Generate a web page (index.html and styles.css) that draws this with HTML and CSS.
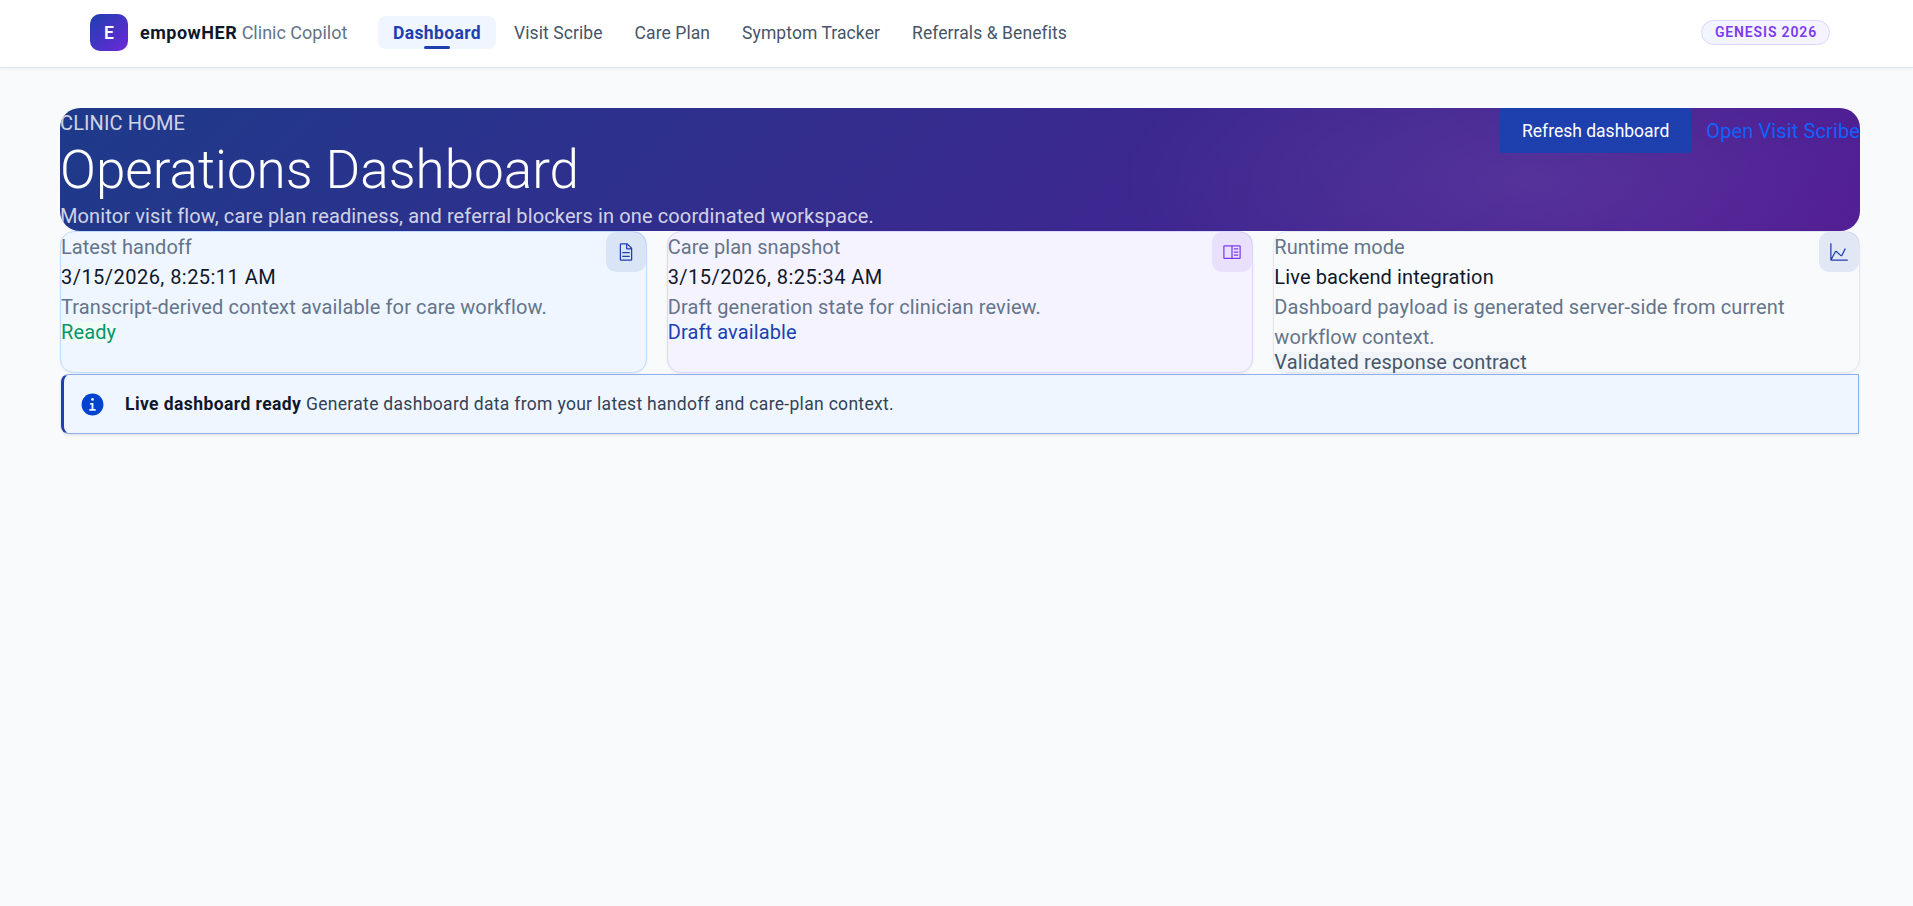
FILE: index.html
```html
<!DOCTYPE html>
<html lang="en">
<head>
    <meta charset="UTF-8">
    <title>empowHER Clinic Copilot</title>
    <meta name="viewport" content="width=device-width, initial-scale=1.0">
    <link rel="stylesheet" href="styles.css">
</head>
<body>
    <header class="topbar">
        <div class="brand">
            <span class="brand-mark">E</span>
            <span class="brand-name"><strong>empowHER</strong> <span class="brand-sub">Clinic Copilot</span></span>
        </div>
        <nav class="nav">
            <a class="nav-link active" href="#">Dashboard</a>
            <a class="nav-link" href="#">Visit Scribe</a>
            <a class="nav-link" href="#">Care Plan</a>
            <a class="nav-link" href="#">Symptom Tracker</a>
            <a class="nav-link" href="#">Referrals &amp; Benefits</a>
        </nav>
        <span class="badge">GENESIS 2026</span>
    </header>

    <main class="page">
        <!-- Hero -->
        <section class="hero">
            <div>
                <p class="eyebrow">CLINIC HOME</p>
                <h1>Operations Dashboard</h1>
                <p class="lead">Monitor visit flow, care plan readiness, and referral blockers in one coordinated workspace.</p>
            </div>
            <div class="hero-actions">
                <button class="btn">Refresh dashboard</button>
                <a class="hero-link" href="#">Open Visit Scribe</a>
            </div>
        </section>

        <!-- Status cards -->
        <section class="cards">
            <article class="card card-blue">
                <div class="card-body">
                    <p class="label">Latest handoff</p>
                    <p class="value date">3/15/2026, 8:25:11 AM</p>
                    <p class="desc">Transcript-derived context available for care workflow.</p>
                    <span class="tag tag-green">Ready</span>
                </div>
                <span class="card-icon">
                    <svg width="20" height="20" viewBox="0 0 32 32" fill="currentColor"><path d="M25.7 9.300l-7-7A.9.9 0 0 0 18 2H8a2 2 0 0 0-2 2v24a2 2 0 0 0 2 2h16a2 2 0 0 0 2-2V10a.9.9 0 0 0-.3-.7zM18 4.400l5.600 5.600H18zM24 28H8V4h8v6a2 2 0 0 0 2 2h6zM10 22h12v2H10zM10 16h12v2H10z"/></svg>
                </span>
            </article>
            <article class="card card-purple">
                <div class="card-body">
                    <p class="label">Care plan snapshot</p>
                    <p class="value date">3/15/2026, 8:25:34 AM</p>
                    <p class="desc">Draft generation state for clinician review.</p>
                    <span class="tag tag-blue">Draft available</span>
                </div>
                <span class="card-icon">
                    <svg width="20" height="20" viewBox="0 0 32 32" fill="currentColor"><path d="M19 10h7v2h-7zM19 15h7v2h-7zM19 20h7v2h-7z"/><path d="M28 5H4a2 2 0 0 0-2 2v18a2 2 0 0 0 2 2h24a2 2 0 0 0 2-2V7a2 2 0 0 0-2-2zM4 7h11v18H4zm13 18V7h11v18z"/></svg>
                </span>
            </article>
            <article class="card">
                <div class="card-body">
                    <p class="label">Runtime mode</p>
                    <p class="value">Live backend integration</p>
                    <p class="desc">Dashboard payload is generated server-side from current workflow context.</p>
                    <span class="tag tag-gray">Validated response contract</span>
                </div>
                <span class="card-icon">
                    <svg width="20" height="20" viewBox="0 0 32 32" fill="currentColor"><path d="M4.670 28l6.390-12 7.300 6.490a2 2 0 0 0 1.700.470 2 2 0 0 0 1.420-1.070L27 10.900l-1.820-.9-5.490 11-7.300-6.490a2 2 0 0 0-1.680-.510 2 2 0 0 0-1.420 1L4 25V2H2v26a2 2 0 0 0 2 2h26v-2z"/></svg>
                </span>
            </article>
        </section>

        <div class="notice">
            <svg class="notice-icon" width="25" height="25" viewBox="0 0 32 32"><circle cx="16" cy="16" r="14" fill="#0043ce"/><circle cx="16" cy="9.500" r="1.700" fill="#eff6ff"/><path d="M13 14h4.200v7.700h2.900V24h-8.200v-2.300h2.900v-5.400H13z" fill="#eff6ff"/></svg>
            <p class="notice-text"><strong>Live dashboard ready</strong> Generate dashboard data from your latest handoff and care-plan context.</p>
        </div>
    </main>
</body>
</html>
```

FILE: styles.css
```css
:root {
    --blue: #1e40af;
    --purple: #7c3aed;
    --ink: #0f172a;
    --muted: #64748b;
    --slate: #475569;
    --page-bg: #f8fafc;
}
* {
    box-sizing: border-box;
}
body {
    margin: 0;
    min-height: 100vh;
    background: var(--page-bg);
    color: var(--ink);
    font-family: Roboto, "Noto Sans", sans-serif;
    font-size: 20px;
    line-height: 30px;
    letter-spacing: 0.12px;
}
p, h1 {
    margin: 0;
}
a {
    text-decoration: none;
}

/* Top bar */
.topbar {
    display: flex;
    align-items: center;
    height: 68px;
    padding: 0 83px 2px 90px;
    background: #fff;
    border-bottom: 1px solid #e2e8f0;
    box-shadow: 0 1px 3px rgba(15, 23, 42, 0.06);
}
.brand {
    display: flex;
    align-items: center;
    gap: 12px;
    width: 288px;
}
.brand-mark {
    display: flex;
    align-items: center;
    justify-content: center;
    width: 38px;
    height: 37px;
    border-radius: 10px;
    background: linear-gradient(135deg, var(--blue), #6d28d9);
    color: #fff;
    font-size: 17.5px;
    font-weight: 600;
}
.brand-name {
    padding-top: 1px;
    font-size: 18px;
    letter-spacing: 0;
    white-space: nowrap;
}
.brand-name strong {
    font-weight: 700;
    letter-spacing: 0.5px;
}
.brand-sub {
    color: var(--muted);
}
.nav {
    display: flex;
    gap: 2px;
}
.nav-link {
    position: relative;
    padding: 1px 15px 0;
    border-radius: 8px;
    color: var(--slate);
    font-size: 17.5px;
    line-height: 32px;
    letter-spacing: 0.08px;
    white-space: nowrap;
}
.nav-link.active {
    margin-right: 1px;
    background: #eff6ff;
    color: var(--blue);
    font-weight: 700;
    letter-spacing: 0.37px;
}
.nav-link.active::after {
    content: "";
    position: absolute;
    left: 50%;
    bottom: 0;
    width: 26px;
    height: 3px;
    margin-left: -13px;
    border-radius: 2px;
    background: var(--blue);
}
.badge {
    margin-left: auto;
    padding: 0 12px 0 13px;
    border: 1px solid #ddd6fe;
    border-radius: 13px;
    background: linear-gradient(135deg, #eff6ff, #f5f3ff 40%);
    color: var(--purple);
    font-size: 14px;
    font-weight: 600;
    line-height: 23px;
    letter-spacing: 0.85px;
}

/* Page */
.page {
    padding: 40px 53px 0 60px;
}
.hero {
    display: flex;
    justify-content: space-between;
    align-items: flex-start;
    height: 123px;
    border-radius: 20px;
    background:
        radial-gradient(420px 170px at 82% 60%, rgba(255, 255, 255, 0.08), transparent),
        linear-gradient(135deg, #1e3a8a 0%, #501b93 100%);
    color: #fff;
    overflow: hidden;
}
.eyebrow, .lead {
    color: rgba(255, 255, 255, 0.8);
}
.hero h1 {
    padding-top: 2px;
    font-size: 53px;
    font-weight: 300;
    line-height: 61px;
    letter-spacing: 0;
}
.hero-actions {
    display: flex;
    align-items: center;
    gap: 15px;
    height: 45px;
}
.btn {
    height: 45px;
    padding: 0 22px;
    border: 0;
    background: var(--blue);
    color: #fff;
    font-family: inherit;
    font-size: 17.5px;
}
.hero-link {
    color: #0f62fe;
}

/* Cards */
.cards {
    display: grid;
    grid-template-columns: repeat(3, 1fr);
    gap: 20px;
}
.card {
    display: flex;
    justify-content: space-between;
    height: 142px;
    border: 1px solid #e2e8f0;
    border-radius: 14px;
    box-shadow: 0 1px 3px rgba(15, 23, 42, 0.05);
}
.card-blue {
    background: #eff6ff;
    border-color: #bfdbfe;
}
.card-purple {
    background: #f5f3ff;
    border-color: #ddd6fe;
}
.label, .desc {
    color: var(--muted);
}
.label {
    letter-spacing: 0.05px;
}
.date {
    letter-spacing: 0.46px;
}
.tag {
    display: block;
    width: fit-content;
    height: 20px;
    border-radius: 10px;
    line-height: 20px;
}
.tag-green {
    background: #f0fdf4;
    color: #059669;
}
.tag-blue {
    background: #eff6ff;
    color: var(--blue);
}
.tag-gray {
    background: #f1f5f9;
    color: var(--slate);
}
.card-icon {
    display: flex;
    flex: none;
    align-items: center;
    justify-content: center;
    width: 40px;
    height: 40px;
    border-radius: 10px;
    background: rgba(30, 64, 175, 0.1);
    color: var(--blue);
}
.card-purple .card-icon {
    background: rgba(124, 58, 237, 0.1);
    color: var(--purple);
}

/* Notice */
.notice {
    display: flex;
    align-items: center;
    height: 60px;
    margin: 1px 1px 0;
    padding-left: 16px;
    border: 1px solid #8fb0ec;
    border-left: 3px solid var(--blue);
    border-radius: 8px 0 0 8px;
    background: #eff6ff;
    box-shadow: 0 1px 3px rgba(15, 23, 42, 0.12);
}
.notice-icon {
    margin-right: 20px;
}
.notice-text {
    color: #334155;
    font-size: 17.5px;
    letter-spacing: 0.31px;
}
.notice-text strong {
    color: var(--ink);
    letter-spacing: 0.42px;
}
```
